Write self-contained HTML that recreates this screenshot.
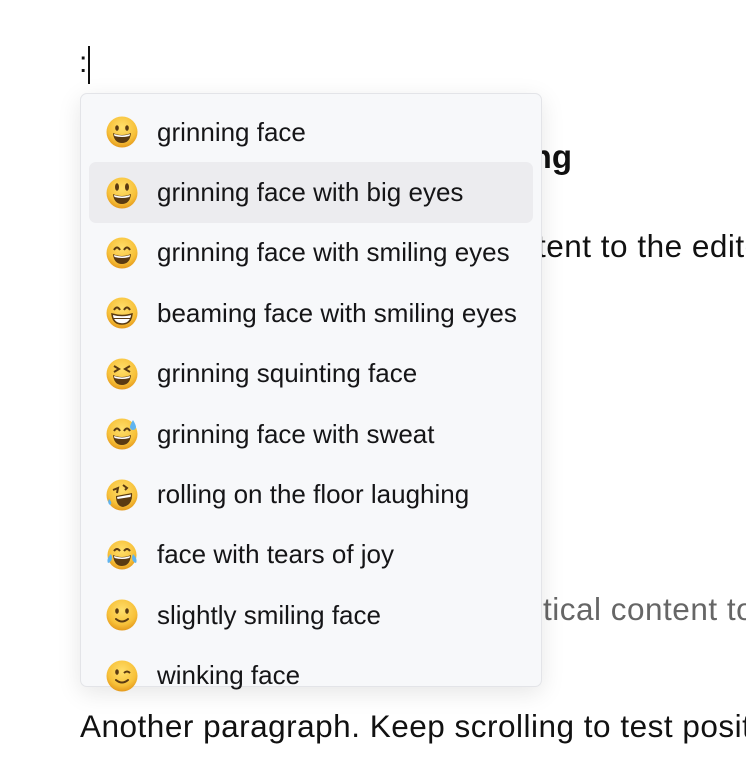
<!DOCTYPE html>
<html><head><meta charset="utf-8"><style>
*{margin:0;padding:0;box-sizing:border-box}
body{width:746px;height:772px;overflow:hidden;background:#fff;position:relative;font-family:"Liberation Sans",Arial,sans-serif;color:#111}
#clip{position:absolute;left:0;top:0;width:746px;height:772px;overflow:hidden}
.t{position:absolute;white-space:nowrap;font-size:31.5px;letter-spacing:0.5px}
#pop{position:absolute;left:80px;top:93px;width:462px;height:594px;background:#f7f8fa;border:1px solid #e3e4e8;border-radius:7px;box-shadow:0 6px 24px rgba(0,0,0,0.10);padding:8px}
.row{height:60.4px;display:flex;align-items:center;border-radius:7px;font-size:26px;color:#151517;white-space:nowrap}
.row.sel{background:#ececef}
.row svg{margin-left:17px;margin-right:19px;flex:none}
</style></head><body><div id="clip">
<div class="t" style="left:79px;top:46px;font-size:30px">:</div>
<div style="position:absolute;left:88px;top:46px;width:1.5px;height:38px;background:#111"></div>
<div class="t" style="right:174px;top:138px;font-size:33px;font-weight:bold;letter-spacing:0">Scroll Positioning</div>
<div class="t" style="left:537px;top:228px">tent to the editor</div>
<div class="t" style="left:543px;top:591px;color:#666">tical content to</div>
<div class="t" style="left:80px;top:708px">Another paragraph. Keep scrolling to test positioning</div>
<svg width="0" height="0" style="position:absolute"><defs><radialGradient id="g" cx="50%" cy="35%" r="65%"><stop offset="0" stop-color="#ffdf6b"/><stop offset="0.7" stop-color="#f7c13a"/><stop offset="1" stop-color="#e59a1c"/></radialGradient></defs></svg>
<div id="pop">
<div class="row"><svg width="32" height="32" viewBox="0 0 32 32"><circle cx="16" cy="16" r="15.5" fill="url(#g)"/><ellipse cx="11" cy="12" rx="1.8" ry="2.8" fill="#5a3a12"/><ellipse cx="21" cy="12" rx="1.8" ry="2.8" fill="#5a3a12"/><path d="M7 17Q16 21 25 17Q24 27 16 27Q8 27 7 17Z" fill="#5a3a12"/><path d="M8 18Q16 21 24 18L23.5 20Q16 22 8.5 20Z" fill="#fff"/></svg>grinning face</div>
<div class="row sel"><svg width="32" height="32" viewBox="0 0 32 32"><circle cx="16" cy="16" r="15.5" fill="url(#g)"/><ellipse cx="11" cy="10" rx="2" ry="3.8" fill="#5a3a12"/><ellipse cx="21" cy="10" rx="2" ry="3.8" fill="#5a3a12"/><path d="M7 17Q16 21 25 17Q24 27 16 27Q8 27 7 17Z" fill="#5a3a12"/><path d="M8 18Q16 21 24 18L23.5 20Q16 22 8.5 20Z" fill="#fff"/></svg>grinning face with big eyes</div>
<div class="row"><svg width="32" height="32" viewBox="0 0 32 32"><circle cx="16" cy="16" r="15.5" fill="url(#g)"/><path d="M8 13Q11 8 14 13M18 13Q21 8 24 13" stroke="#5a3a12" stroke-width="2" fill="none"/><path d="M7 17Q16 21 25 17Q24 27 16 27Q8 27 7 17Z" fill="#5a3a12"/><path d="M8 18Q16 21 24 18L23.5 20Q16 22 8.5 20Z" fill="#fff"/></svg>grinning face with smiling eyes</div>
<div class="row"><svg width="32" height="32" viewBox="0 0 32 32"><circle cx="16" cy="16" r="15.5" fill="url(#g)"/><path d="M8 13Q11 8 14 13M18 13Q21 8 24 13" stroke="#5a3a12" stroke-width="2" fill="none"/><path d="M6 17Q16 20 26 17Q25 27 16 27Q7 27 6 17Z" fill="#fff" stroke="#5a3a12" stroke-width="1.5"/><path d="M7 21.5H25" stroke="#5a3a12" stroke-width="1"/></svg>beaming face with smiling eyes</div>
<div class="row"><svg width="32" height="32" viewBox="0 0 32 32"><circle cx="16" cy="16" r="15.5" fill="url(#g)"/><path d="M8 8L13 11L8 14M24 8L19 11L24 14" stroke="#5a3a12" stroke-width="2" fill="none"/><path d="M7 17Q16 21 25 17Q24 27 16 27Q8 27 7 17Z" fill="#5a3a12"/><path d="M8 18Q16 21 24 18L23.5 20Q16 22 8.5 20Z" fill="#fff"/></svg>grinning squinting face</div>
<div class="row"><svg width="32" height="32" viewBox="0 0 32 32"><circle cx="16" cy="16" r="15.5" fill="url(#g)"/><path d="M8 13Q11 8 14 13M18 13Q21 8 24 13" stroke="#5a3a12" stroke-width="2" fill="none"/><path d="M7 17Q16 21 25 17Q24 27 16 27Q8 27 7 17Z" fill="#5a3a12"/><path d="M8 18Q16 21 24 18L23.5 20Q16 22 8.5 20Z" fill="#fff"/><path d="M27 2Q24 7 24 9A3 3 0 0 0 30 9Q30 7 27 2Z" fill="#5fb4f0"/></svg>grinning face with sweat</div>
<div class="row"><svg width="32" height="32" viewBox="0 0 32 32"><circle cx="16" cy="16" r="15.5" fill="url(#g)"/><path d="M7 11L12 9L11 14M17 6L21 9L19 11" stroke="#5a3a12" stroke-width="2" fill="none"/><path d="M10 17L26 14Q27 26 17 28Q10 27 10 17Z" fill="#5a3a12"/><path d="M11 18L25 15.5L24.5 18L11.5 20Z" fill="#fff"/><path d="M3 20Q1 24 4 26Q7 24 3 20Z" fill="#5fb4f0"/></svg>rolling on the floor laughing</div>
<div class="row"><svg width="32" height="32" viewBox="0 0 32 32"><circle cx="16" cy="16" r="14.5" fill="url(#g)"/><path d="M8 12Q11 8 14 12M18 12Q21 8 24 12" stroke="#5a3a12" stroke-width="2" fill="none"/><path d="M7 16Q16 20 25 16Q24 27 16 27Q8 27 7 16Z" fill="#5a3a12"/><path d="M8 17Q16 20 24 17L23.5 19Q16 21 8.5 19Z" fill="#fff"/><path d="M5 15Q0 20 2 24Q6 23 6 18Z M27 15Q32 20 30 24Q26 23 26 18Z" fill="#5fb4f0"/></svg>face with tears of joy</div>
<div class="row"><svg width="32" height="32" viewBox="0 0 32 32"><circle cx="16" cy="16" r="15.5" fill="url(#g)"/><ellipse cx="11" cy="12" rx="1.8" ry="2.8" fill="#5a3a12"/><ellipse cx="21" cy="12" rx="1.8" ry="2.8" fill="#5a3a12"/><path d="M10 20Q16 25 22 20" stroke="#5a3a12" stroke-width="2" fill="none" stroke-linecap="round"/></svg>slightly smiling face</div>
<div class="row"><svg width="32" height="32" viewBox="0 0 32 32"><circle cx="16" cy="16" r="15.5" fill="url(#g)"/><ellipse cx="11" cy="12" rx="1.8" ry="2.8" fill="#5a3a12"/><path d="M18 13Q21 10 24 13" stroke="#5a3a12" stroke-width="2" fill="none"/><path d="M10 20Q16 25 22 20" stroke="#5a3a12" stroke-width="2" fill="none" stroke-linecap="round"/></svg>winking face</div>
</div>
</div></body></html>
